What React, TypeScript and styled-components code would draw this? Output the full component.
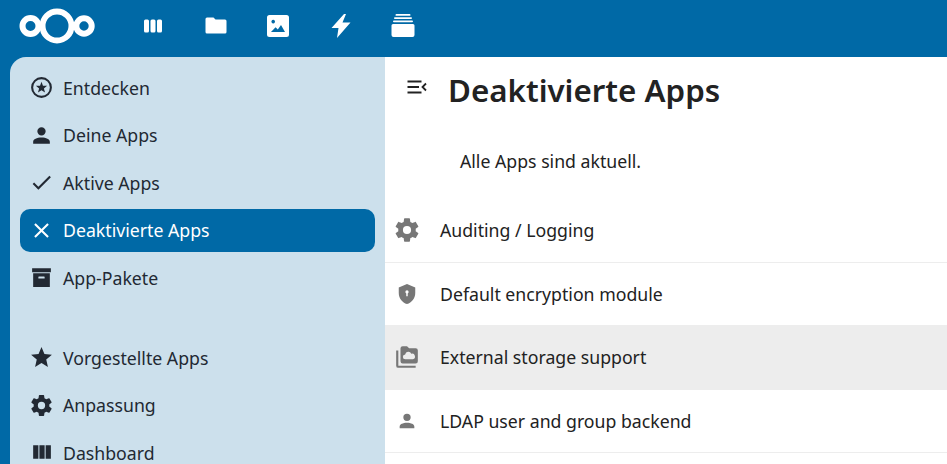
import { FC } from "react";
import styled, { createGlobalStyle } from "styled-components";

const mdi = {
  account: "M12,4A4,4 0 0,1 16,8A4,4 0 0,1 12,12A4,4 0 0,1 8,8A4,4 0 0,1 12,4M12,14C16.42,14 20,15.79 20,18V20H4V18C4,15.79 7.58,14 12,14Z",
  check: "M21,7L9,19L3.5,13.5L4.91,12.09L9,16.17L19.59,5.59L21,7Z",
  close: "M19,6.41L17.59,5L12,10.59L6.41,5L5,6.41L10.59,12L5,17.59L6.41,19L12,13.41L17.59,19L19,17.59L13.41,12L19,6.41Z",
  archive: "M3,3H21V7H3V3M4,8H20V21H4V8M9.5,11A0.5,0.5 0 0,0 9,11.5V13H15V11.5A0.5,0.5 0 0,0 14.5,11H9.5Z",
  star: "M12,17.27L18.18,21L16.54,13.97L22,9.24L14.81,8.62L12,2L9.19,8.62L2,9.24L7.45,13.97L5.82,21L12,17.27Z",
  cog: "M12,15.5A3.5,3.5 0 0,1 8.5,12A3.5,3.5 0 0,1 12,8.5A3.5,3.5 0 0,1 15.5,12A3.5,3.5 0 0,1 12,15.5M19.43,12.97C19.47,12.65 19.5,12.33 19.5,12C19.5,11.67 19.47,11.34 19.43,11L21.54,9.37C21.73,9.22 21.78,8.95 21.66,8.73L19.66,5.27C19.54,5.05 19.27,4.96 19.05,5.05L16.56,6.05C16.04,5.66 15.5,5.32 14.87,5.07L14.5,2.42C14.46,2.18 14.25,2 14,2H10C9.75,2 9.54,2.18 9.5,2.42L9.13,5.07C8.5,5.32 7.96,5.66 7.44,6.05L4.95,5.05C4.73,4.96 4.46,5.05 4.34,5.27L2.34,8.73C2.21,8.95 2.27,9.22 2.46,9.37L4.57,11C4.53,11.34 4.5,11.67 4.5,12C4.5,12.33 4.53,12.65 4.57,12.97L2.46,14.63C2.27,14.78 2.21,15.05 2.34,15.27L4.34,18.73C4.46,18.95 4.73,19.03 4.95,18.95L7.44,17.94C7.96,18.34 8.5,18.68 9.13,18.93L9.5,21.58C9.54,21.82 9.75,22 10,22H14C14.25,22 14.46,21.82 14.5,21.58L14.87,18.93C15.5,18.67 16.04,18.34 16.56,17.94L19.05,18.95C19.27,19.03 19.54,18.95 19.66,18.73L21.66,15.27C21.78,15.05 21.73,14.78 21.54,14.63L19.43,12.97Z",
  columns: "M16,5V18H21V5M4,18H9V5H4M10,18H15V5H10V18Z",
  starCircle: "M12,2A10,10 0 1,0 22,12A10,10 0 0,0 12,2M12,20A8,8 0 1,1 20,12A8,8 0 0,1 12,20M12,6.5L13.4,10.2L17.4,10.4L14.3,12.9L15.4,16.8L12,14.6L8.6,16.8L9.7,12.9L6.6,10.4L10.6,10.2Z",
  shield: "M12,1L3,5V11C3,16.55 6.84,21.74 12,23C17.16,21.74 21,16.55 21,11V5L12,1M12,8A1.8,1.8 0 0,1 13.8,9.8C13.8,10.5 13.4,11.1 12.8,11.4V14.5H11.2V11.4C10.6,11.1 10.2,10.5 10.2,9.8A1.8,1.8 0 0,1 12,8Z",
  storage: "M4,6H2V20A2,2 0 0,0 4,22H20V20H4V6M20,4H14L12,2H8A2,2 0 0,0 6,4V16A2,2 0 0,0 8,18H20A2,2 0 0,0 22,16V6A2,2 0 0,0 20,4M17.5,14H10.5A2.2,2.2 0 0,1 10.3,9.6A3,3 0 0,1 16,9A2.5,2.5 0 0,1 17.5,14Z",
};

const GlobalStyle = createGlobalStyle`
  html, body {
    margin: 0;
    height: 100%;
    overflow: hidden;
    background: #0069a6;
    font-family: "Noto Sans", "Open Sans", sans-serif;
  }
`;

const navTop = [
  { label: "Entdecken", icon: mdi.starCircle },
  { label: "Deine Apps", icon: mdi.account },
  { label: "Aktive Apps", icon: mdi.check },
  { label: "Deaktivierte Apps", icon: mdi.close, active: true },
  { label: "App-Pakete", icon: mdi.archive },
];

const navBottom = [
  { label: "Vorgestellte Apps", icon: mdi.star },
  { label: "Anpassung", icon: mdi.cog },
  { label: "Dashboard", icon: mdi.columns },
];

const apps = [
  { label: "Auditing / Logging", icon: mdi.cog, size: 28 },
  { label: "Default encryption module", icon: mdi.shield, size: 22 },
  { label: "External storage support", icon: mdi.storage, size: 26, hover: true },
  { label: "LDAP user and group backend", icon: mdi.account, size: 22 },
];

const Icon: FC<{ d: string; size?: number }> = ({ d, size = 25 }) => (
  <svg width={size} height={size} viewBox="0 0 24 24" fill="currentColor" fillRule="evenodd">
    <path d={d} />
  </svg>
);

const Logo: FC = () => (
  <LogoSvg width="76" height="36" viewBox="0 0 76 36">
    <g fill="none" stroke="#fff" strokeWidth="6">
      <circle cx="38" cy="18" r="14.5" />
      <circle cx="11.5" cy="18" r="8" />
      <circle cx="65" cy="18" r="7.7" />
    </g>
  </LogoSvg>
);

const DashIcon = () => (
  <svg width="20" height="14" viewBox="0 0 20 14" fill="#fff">
    <rect x="1" y="0.5" width="5" height="13" rx="1.5" />
    <rect x="7.5" y="0.5" width="5" height="13" rx="1.5" />
    <rect x="14" y="0.5" width="5" height="13" rx="1.5" />
  </svg>
);

const FolderIcon = () => (
  <svg width="22" height="17" viewBox="0 0 22 17" fill="#fff">
    <path d="M2,0.5H8.5L10.5,2.5H20A1.5,1.5 0 0,1 21.5,4V15A1.5,1.5 0 0,1 20,16.5H2A1.5,1.5 0 0,1 0.5,15V2A1.5,1.5 0 0,1 2,0.5Z" />
  </svg>
);

const PhotoIcon = () => (
  <svg width="22" height="22" viewBox="0 0 22 22" fillRule="evenodd" fill="#fff">
    <path d="M2.5,0H19.5A2.5,2.5 0 0,1 22,2.5V19.5A2.5,2.5 0 0,1 19.5,22H2.5A2.5,2.5 0 0,1 0,19.5V2.5A2.5,2.5 0 0,1 2.5,0M6.2,4.8A1.8,1.8 0 1,0 6.21,4.8M4,17H18L14,10L10.8,14.5L8.6,12.3Z" />
  </svg>
);

const FlashIcon = () => (
  <svg width="20" height="24" viewBox="0 0 20 24" fill="#fff">
    <path d="M13,0L0.5,14H7.5L6,24L19.5,8.5H11.5L15,0Z" />
  </svg>
);

const StackIcon = () => (
  <svg width="24" height="23" viewBox="0 0 24 23" fill="#fff">
    <rect x="4.5" y="0" width="15" height="1.8" rx="0.9" />
    <rect x="3" y="3.2" width="18" height="1.8" rx="0.9" />
    <rect x="2" y="6.4" width="20" height="1.8" rx="0.9" />
    <path d="M2,10H22A1.5,1.5 0 0,1 23.5,11.5V21A2,2 0 0,1 21.5,23H2.5A2,2 0 0,1 0.5,21V11.5A1.5,1.5 0 0,1 2,10Z" />
  </svg>
);

const App: FC = () => {
  return (
    <Page>
      <GlobalStyle />
      <Header>
        <Logo />
        <HeaderNav>
          <HeaderLink><DashIcon /></HeaderLink>
          <HeaderLink><FolderIcon /></HeaderLink>
          <HeaderLink><PhotoIcon /></HeaderLink>
          <HeaderLink><FlashIcon /></HeaderLink>
          <HeaderLink><StackIcon /></HeaderLink>
        </HeaderNav>
      </Header>
      <Body>
        <Sidebar>
          <NavGroup>
            {navTop.map((item) => (
              <NavItem key={item.label} $active={item.active}>
                <NavIcon><Icon d={item.icon} /></NavIcon>
                {item.label}
              </NavItem>
            ))}
          </NavGroup>
          <NavGroup>
            {navBottom.map((item) => (
              <NavItem key={item.label}>
                <NavIcon><Icon d={item.icon} /></NavIcon>
                {item.label}
              </NavItem>
            ))}
          </NavGroup>
        </Sidebar>
        <Main>
          <TitleRow>
            <ToggleIcon width="20" height="14" viewBox="0 0 20 14" fill="none" stroke="currentColor" strokeWidth="1.8">
              <path d="M0.5 1.5H14.5M0.5 7H12M0.5 12.5H14.5M19 3.5L15.5 7L19 10.5" />
            </ToggleIcon>
            <Title>Deaktivierte Apps</Title>
          </TitleRow>
          <Notice>Alle Apps sind aktuell.</Notice>
          <AppList>
            {apps.map((app) => (
              <AppRow key={app.label} $hover={app.hover}>
                <AppIcon><Icon d={app.icon} size={app.size} /></AppIcon>
                {app.label}
              </AppRow>
            ))}
          </AppList>
        </Main>
      </Body>
    </Page>
  );
};

export default App;

const Page = styled.div`
  display: flex;
  flex-direction: column;
  height: 100vh;
  overflow: hidden;
`;

const Header = styled.header`
  display: flex;
  align-items: center;
  height: 57px;
  flex-shrink: 0;
  box-sizing: border-box;
  padding: 0 0 6px 18.5px;
  background: #0069a6;
`;

const LogoSvg = styled.svg`
  flex-shrink: 0;
`;

const HeaderNav = styled.nav`
  display: flex;
  margin-left: 27.5px;
`;

const HeaderLink = styled.a`
  display: flex;
  align-items: center;
  justify-content: center;
  width: 62.5px;
  height: 51px;
`;

const Body = styled.div`
  display: flex;
  flex: 1;
  min-height: 0;
  padding-left: 10px;
`;

const Sidebar = styled.aside`
  display: flex;
  flex-direction: column;
  gap: 37px;
  width: 375px;
  flex-shrink: 0;
  padding: 9px 10px 0;
  box-sizing: border-box;
  background: #cce0ec;
  border-top-left-radius: 16px;
`;

const NavGroup = styled.div`
  display: flex;
  flex-direction: column;
  gap: 4.5px;
  flex-shrink: 0;
`;

const NavItem = styled.a<{ $active?: boolean }>`
  display: flex;
  align-items: center;
  height: 43px;
  flex-shrink: 0;
  border-radius: 10px;
  font-size: 17.7px;
  color: ${(p) => (p.$active ? "#fff" : "#222933")};
  background: ${(p) => (p.$active ? "#0069a6" : "transparent")};
`;

const NavIcon = styled.span`
  display: flex;
  justify-content: center;
  width: 43px;
`;

const Main = styled.main`
  flex: 1;
  min-width: 0;
  background: #fff;
  color: #222;
`;

const TitleRow = styled.div`
  display: flex;
  align-items: center;
  height: 68px;
`;

const ToggleIcon = styled.svg`
  margin: 0 0 8px 22px;
  color: #222;
`;

const Title = styled.h2`
  margin: 0 0 2px 21px;
  font-size: 31.3px;
  font-weight: 600;
  color: #222;
`;

const Notice = styled.p`
  margin: 0;
  padding-left: 75px;
  height: 74px;
  padding-top: 12px;
  box-sizing: border-box;
  font-size: 17.7px;
  line-height: 48px;
`;

const AppList = styled.div`
  display: flex;
  flex-direction: column;
`;

const AppRow = styled.div<{ $hover?: boolean }>`
  display: flex;
  align-items: center;
  height: 63.5px;
  flex-shrink: 0;
  box-sizing: border-box;
  font-size: 17.7px;
  color: #222;
  background: ${(p) => (p.$hover ? "#ededed" : "#fff")};
  border-bottom: 1px solid #ededed;
`;

const AppIcon = styled.span`
  display: flex;
  justify-content: center;
  width: 44px;
  margin-right: 11px;
  color: #777;
`;
